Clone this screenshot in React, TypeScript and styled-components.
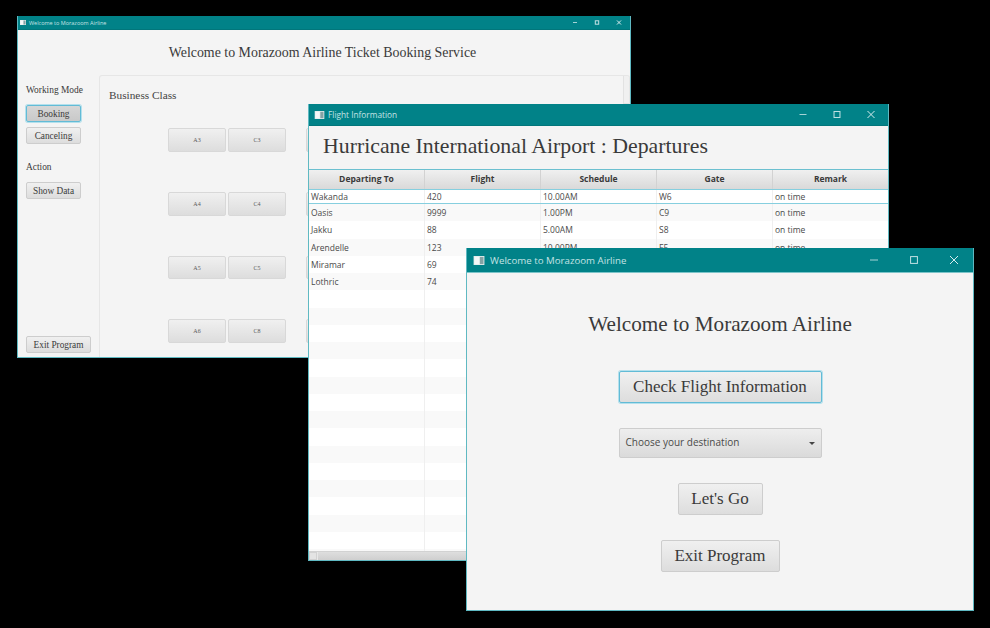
import React from "react";
import styled, { createGlobalStyle } from "styled-components";

const Global = createGlobalStyle`
  html, body { margin: 0; padding: 0; background: #000; }
  #root { width: 990px; height: 628px; overflow: hidden; }
  * { box-sizing: border-box; }
`;

const Desktop = styled.div`
  position: relative;
  width: 990px;
  height: 628px;
  background: #000;
  overflow: hidden;
`;

const Win = styled.section<{ $x: number; $y: number; $w: number; $h: number }>`
  position: absolute;
  left: ${(p) => p.$x}px;
  top: ${(p) => p.$y}px;
  width: ${(p) => p.$w}px;
  height: ${(p) => p.$h}px;
  background: #f4f4f4;
  border: 1px solid #5fb9c2;
  border-top: none;
  display: flex;
  flex-direction: column;
  overflow: hidden;
`;

const TitleBar = styled.header<{ $h: number; $size: number; $pad: number; $gap: number; $line?: boolean }>`
  flex: none;
  margin: 0 -1px;
  height: ${(p) => p.$h}px;
  background: #018288;
  color: #c4e2e4;
  font: ${(p) => p.$size}px "Open Sans", "Noto Sans", sans-serif;
  display: flex;
  align-items: center;
  padding-left: ${(p) => p.$pad}px;
  gap: ${(p) => p.$gap}px;
  white-space: nowrap;
  border-bottom: 1px solid ${(p) => (p.$line ? "#7cc4c9" : "#01767b")};
`;

const TitleText = styled.span`
  flex: 1;
`;

const Controls = styled.div<{ $w: number; $mr: number }>`
  display: flex;
  flex: none;
  margin-right: ${(p) => p.$mr}px;
  & > svg {
    width: ${(p) => p.$w}px;
  }
`;

const AppIcon = ({ w, h }: { w: number; h: number }) => (
  <svg width={w} height={h} viewBox="0 0 12 10">
    <rect width="12" height="10" fill="#e3ecec" />
    <rect x="7" y="1" width="4" height="8" fill="#84a3a5" />
    <rect x="1" y="1" width="5" height="8" fill="#f4f7f7" />
  </svg>
);

const WinControls = ({ w, h, s, mr }: { w: number; h: number; s: number; mr: number }) => {
  const cx = w / 2;
  const cy = h / 2 - 0.5;
  return (
    <Controls $w={w} $mr={mr}>
      <svg height={h} viewBox={`0 0 ${w} ${h}`}>
        <line x1={cx - s} x2={cx + s} y1={cy} y2={cy} stroke="#a6d3d6" strokeWidth="1" />
      </svg>
      <svg height={h} viewBox={`0 0 ${w} ${h}`}>
        <rect x={cx - s * 0.85} y={cy - s * 0.85} width={s * 1.7} height={s * 1.7} fill="none" stroke="#c4e2e4" strokeWidth="1" />
      </svg>
      <svg height={h} viewBox={`0 0 ${w} ${h}`}>
        <path d={`M${cx - s} ${cy - s}L${cx + s} ${cy + s}M${cx + s} ${cy - s}L${cx - s} ${cy + s}`} stroke="#d6ecee" strokeWidth="1" />
      </svg>
    </Controls>
  );
};

const serif = `"Liberation Serif", "Times New Roman", serif`;

const FxButton = styled.button<{ $focus?: boolean; $size: number; $w: number; $h: number; $armed?: boolean; $mt?: number }>`
  width: ${(p) => p.$w}px;
  height: ${(p) => p.$h}px;
  margin-top: ${(p) => p.$mt ?? 0}px;
  flex: none;
  padding: 0;
  font: ${(p) => p.$size}px ${serif};
  color: #3a3a3a;
  border-radius: 2px;
  border: 1px solid ${(p) => (p.$focus ? "#62bbd6" : "#cdcdcd")};
  background: ${(p) =>
    p.$armed
      ? "linear-gradient(#d6d6d6, #c9c9c9)"
      : "linear-gradient(#f0f0f0, #dddddd)"};
  box-shadow: ${(p) => (p.$focus ? "0 0 0 1px #b4e0ec" : "none")};
  white-space: nowrap;
`;

/* ---- Booking window ---- */
const BookingBody = styled.div`
  flex: 1;
  display: flex;
  flex-direction: column;
  min-height: 0;
`;

const BookingHeading = styled.h1`
  margin: 0;
  height: 45px;
  flex: none;
  font: 400 13.9px/46px ${serif};
  color: #3a3a3a;
  text-align: center;
  padding-right: 3px;
`;

const BookingMain = styled.div`
  flex: 1;
  display: flex;
  min-height: 0;
`;

const SideColumn = styled.aside`
  width: 81px;
  flex: none;
  padding: 9px 0 4px 8px;
  display: flex;
  flex-direction: column;
`;

const SideLabel = styled.div<{ $mt?: number }>`
  font: 9.4px/12px ${serif};
  color: #3a3a3a;
  margin-top: ${(p) => p.$mt ?? 0}px;
  margin-bottom: 9px;
`;

const SideStack = styled.div`
  display: flex;
  flex-direction: column;
  gap: 5px;
`;

const Spacer = styled.div`
  flex: 1;
`;

const SeatPanel = styled.div`
  flex: 1;
  border: 1px solid #e6e6e6;
  border-bottom: none;
  border-radius: 3px 3px 0 0;
  padding: 13px 9px;
  position: relative;
  overflow: hidden;
  background: #f4f4f4;
`;

const PanelTitle = styled.div`
  font: 11.3px/13px ${serif};
  color: #444;
`;

const SeatGrid = styled.div`
  margin: 26px 0 0 59px;
  display: grid;
  grid-template-columns: repeat(3, 58px);
  grid-template-rows: 24px 24px 23px 24px;
  column-gap: 2px;
  row-gap: 40px;
`;

const Seat = styled(FxButton)`
  height: 100%;
  color: #5a5a5a;
  border-color: #d8d8d8;
  &:nth-child(3n) {
    margin-left: 18px;
  }
`;

const ThinScroll = styled.div`
  position: absolute;
  right: 0;
  top: 0;
  width: 6px;
  height: 28px;
  background: #f0f0f0;
  border-left: 1px solid #e2e2e2;
  border-bottom: 1px solid #e2e2e2;
`;

/* ---- Flight table window ---- */
const FlightHeading = styled.h1`
  margin: 0;
  height: 43px;
  flex: none;
  font: 400 21.8px/41px ${serif};
  color: #3a3a3a;
  padding-left: 14px;
  white-space: nowrap;
`;

const TableBox = styled.div`
  flex: 1;
  border-top: 1px solid #6cc0d0;
  display: flex;
  flex-direction: column;
  min-height: 0;
  font: 8.5px "Open Sans", "Noto Sans", sans-serif;
`;

const Cols = `grid-template-columns: 116px 116px 116px 116px 1fr;`;

const HeaderRow = styled.div`
  display: grid;
  ${Cols}
  height: 19px;
  flex: none;
  background: linear-gradient(#f0f0f0, #d9d9d9);
`;

const HeadCell = styled.div`
  font-weight: 700;
  color: #3a3a3a;
  text-align: center;
  line-height: 17px;
  border-right: 1px solid #d2d2d2;
  &:last-child { border-right: none; }
`;

const Rows = styled.div`
  flex: 1;
  min-height: 0;
  overflow: hidden;
`;

const Row = styled.div<{ $odd: boolean; $sel?: boolean }>`
  display: grid;
  ${Cols}
  height: ${(p) => (p.$sel ? 15 : 17.25)}px;
  line-height: ${(p) => (p.$sel ? 13 : 17)}px;
  background: ${(p) => (p.$sel || !p.$odd ? "#fff" : "#f9f9f9")};
  border: ${(p) => (p.$sel ? "1px solid #86cfdf" : "none")};
  border-width: ${(p) => (p.$sel ? "1px 0" : "0")};
`;

const Cell = styled.div`
  color: #4a4a4a;
  padding-left: 2px;
  border-right: 1px solid #efefef;
  &:last-child { border-right: none; }
`;

const HScroll = styled.div`
  flex: none;
  height: 9px;
  display: flex;
  background: #e8e8e8;
  border-top: 1px solid #d2d2d2;
`;

const ScrollBtn = styled.div`
  width: 8px;
  background: #e4e4e4;
  border: 1px solid #d2d2d2;
  flex: none;
`;

const ScrollThumb = styled.div`
  flex: 1;
  background: linear-gradient(#dedede, #cfcfcf);
  margin-left: 1px;
`;

/* ---- Front window ---- */
const FrontBody = styled.div`
  flex: 1;
  display: flex;
  flex-direction: column;
  align-items: center;
  padding-top: 39px;
`;

const FrontHeading = styled.h1`
  margin: 0;
  font: 400 21.2px/25px ${serif};
  color: #3a3a3a;
  height: 25px;
  white-space: nowrap;
`;

const Combo = styled.div`
  width: 203px;
  height: 30px;
  margin-top: 25px;
  border: 1px solid #cdcdcd;
  border-radius: 2px;
  background: linear-gradient(#eeeeee, #dadada);
  font: 10px "Open Sans", "Noto Sans", sans-serif;
  color: #4a4a4a;
  display: flex;
  align-items: center;
  justify-content: space-between;
  padding: 0 6px 2px;
`;

const Caret = styled.i`
  width: 0;
  height: 0;
  border-left: 3.5px solid transparent;
  border-right: 3.5px solid transparent;
  border-top: 3.5px solid #444;
  margin-top: 2px;
`;

const flights = [
  ["Wakanda", "420", "10.00AM", "W6", "on time"],
  ["Oasis", "9999", "1.00PM", "C9", "on time"],
  ["Jakku", "88", "5.00AM", "S8", "on time"],
  ["Arendelle", "123", "10.00PM", "F5", "on time"],
  ["Miramar", "69", "", "", ""],
  ["Lothric", "74", "", "", ""],
];
const rows = [...flights, ...Array.from({ length: 16 }, () => ["", "", "", "", ""])];
const seats = ["A3", "C3", "", "A4", "C4", "", "A5", "C5", "", "A6", "C8", ""];

export default function App() {
  return (
    <Desktop>
      <Global />
      <Win $x={17} $y={16} $w={614} $h={342}>
        <TitleBar $h={14} $size={5.5} $pad={3} $gap={3}>
          <AppIcon w={6} h={5} />
          <TitleText>Welcome to Morazoom Airline</TitleText>
          <WinControls w={22} h={14} s={2} mr={1} />
        </TitleBar>
        <BookingBody>
          <BookingHeading>Welcome to Morazoom Airline Ticket Booking Service</BookingHeading>
          <BookingMain>
            <SideColumn>
              <SideLabel>Working Mode</SideLabel>
              <SideStack>
                <FxButton $w={55} $h={17} $size={9.3} $focus $armed>Booking</FxButton>
                <FxButton $w={55} $h={17} $size={9.3}>Canceling</FxButton>
              </SideStack>
              <SideLabel $mt={17}>Action</SideLabel>
              <FxButton $w={55} $h={17} $size={9.3}>Show Data</FxButton>
              <Spacer />
              <FxButton $w={65} $h={17} $size={9.3}>Exit Program</FxButton>
            </SideColumn>
            <SeatPanel>
              <PanelTitle>Business Class</PanelTitle>
              <SeatGrid>
                {seats.map((s, i) => (
                  <Seat key={i} $w={58} $h={24} $size={6}>{s}</Seat>
                ))}
              </SeatGrid>
              <ThinScroll />
            </SeatPanel>
          </BookingMain>
        </BookingBody>
      </Win>

      <Win $x={308} $y={104} $w={581} $h={457}>
        <TitleBar $h={22} $size={8.3} $pad={6} $gap={3}>
          <AppIcon w={11} h={8} />
          <TitleText>Flight Information</TitleText>
          <WinControls w={34} h={22} s={3.5} mr={1} />
        </TitleBar>
        <FlightHeading>Hurricane International Airport : Departures</FlightHeading>
        <TableBox>
          <HeaderRow>
            {["Departing To", "Flight", "Schedule", "Gate", "Remark"].map((h) => (
              <HeadCell key={h}>{h}</HeadCell>
            ))}
          </HeaderRow>
          <Rows>
            {rows.map((r, i) => (
              <Row key={i} $odd={i % 2 === 1} $sel={i === 0}>
                {r.map((c, j) => (
                  <Cell key={j}>{c}</Cell>
                ))}
              </Row>
            ))}
          </Rows>
          <HScroll>
            <ScrollBtn />
            <ScrollThumb />
          </HScroll>
        </TableBox>
      </Win>

      <Win $x={466} $y={248} $w={508} $h={363}>
        <TitleBar $h={25} $size={9.7} $pad={7} $gap={5} $line>
          <AppIcon w={12} h={9} />
          <TitleText>Welcome to Morazoom Airline</TitleText>
          <WinControls w={40} h={25} s={4} mr={0} />
        </TitleBar>
        <FrontBody>
          <FrontHeading>Welcome to Morazoom Airline</FrontHeading>
          <FxButton $w={203} $h={32} $size={17} $focus $mt={34}>Check Flight Information</FxButton>
          <Combo>
            <span>Choose your destination</span>
            <Caret />
          </Combo>
          <FxButton $w={85} $h={32} $size={17} $mt={25}>Let's Go</FxButton>
          <FxButton $w={119} $h={32} $size={17} $mt={25}>Exit Program</FxButton>
        </FrontBody>
      </Win>
    </Desktop>
  );
}
